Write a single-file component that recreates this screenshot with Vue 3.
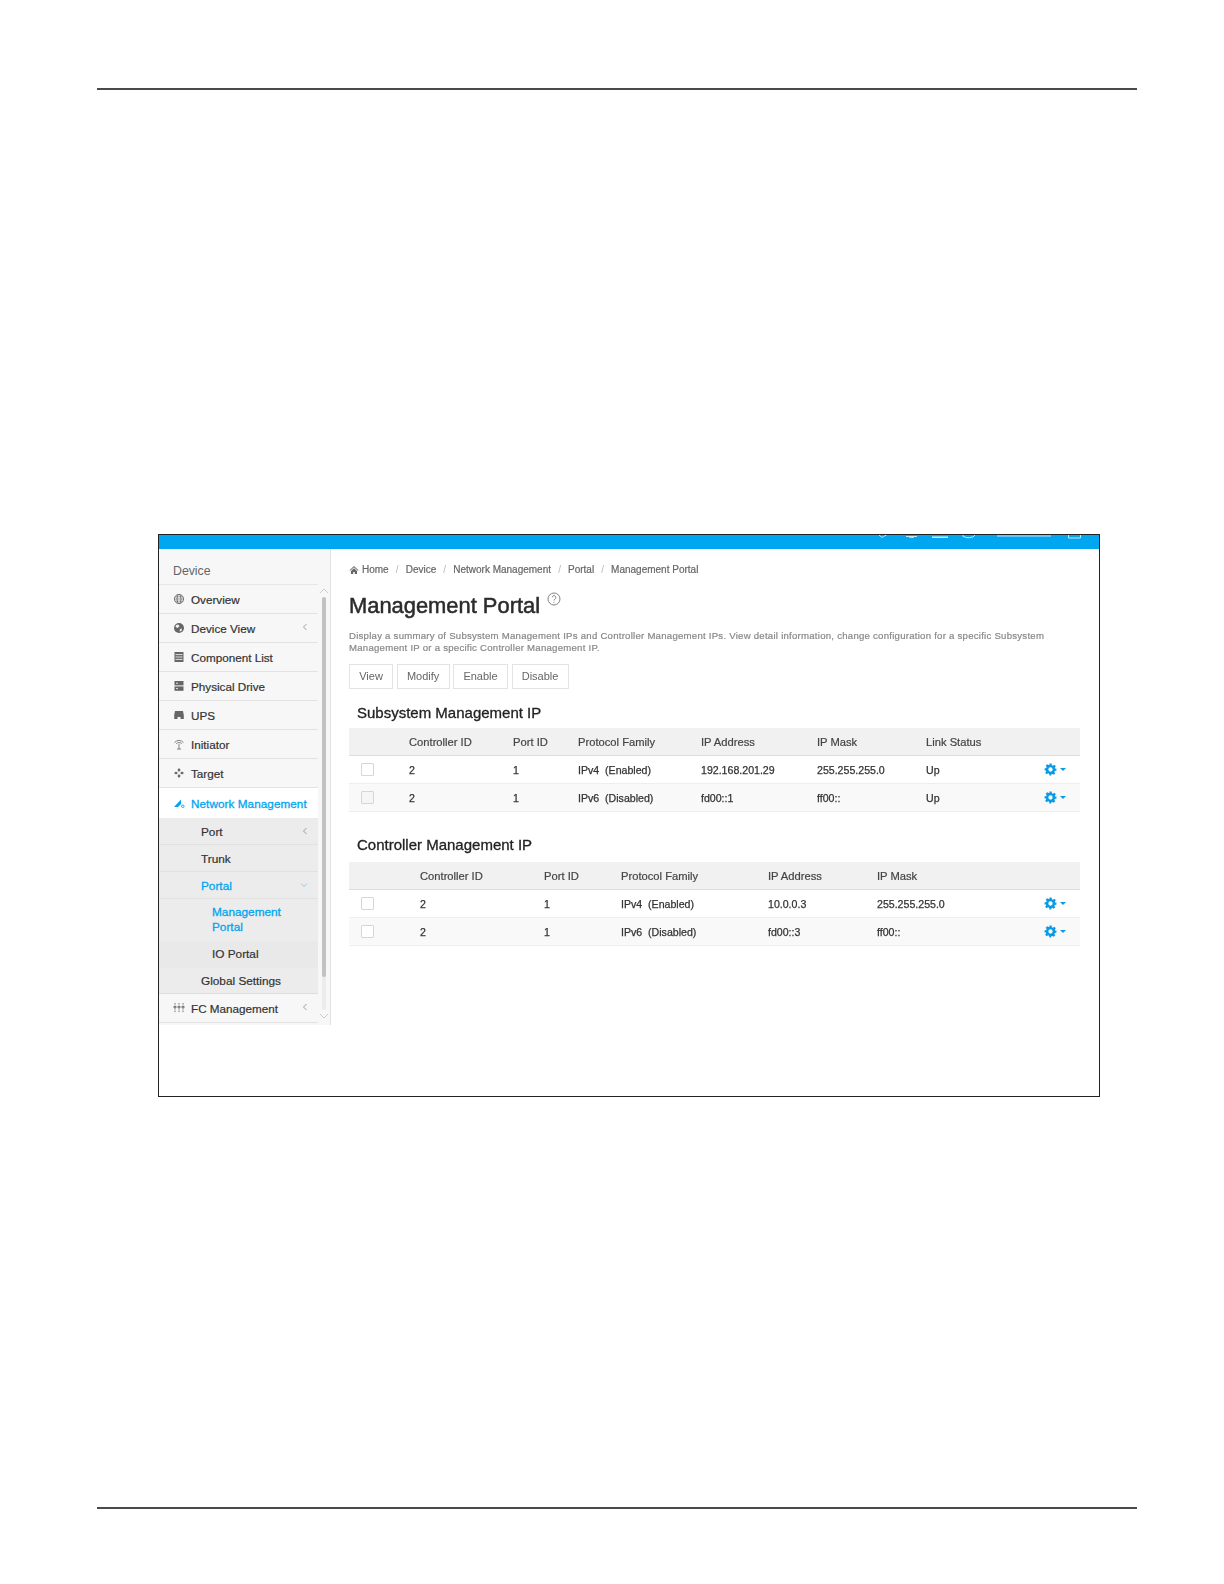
<script setup>
const t1Head = ['', 'Controller ID', 'Port ID', 'Protocol Family', 'IP Address', 'IP Mask', 'Link Status', '']
const t1Rows = [
  ['2', '1', 'IPv4  (Enabled)', '192.168.201.29', '255.255.255.0', 'Up'],
  ['2', '1', 'IPv6  (Disabled)', 'fd00::1', 'ff00::', 'Up']
]
const t2Head = ['', 'Controller ID', 'Port ID', 'Protocol Family', 'IP Address', 'IP Mask', '', '']
const t2Rows = [
  ['2', '1', 'IPv4  (Enabled)', '10.0.0.3', '255.255.255.0', ''],
  ['2', '1', 'IPv6  (Disabled)', 'fd00::3', 'ff00::', '']
]
const tables = [
  { title: 'Subsystem Management IP', cls: 't1', head: t1Head, rows: t1Rows },
  { title: 'Controller Management IP', cls: 't2', head: t2Head, rows: t2Rows }
]
const crumbs = ['Device', 'Network Management', 'Portal', 'Management Portal']
const buttons = ['View', 'Modify', 'Enable', 'Disable']
const mainItems = [
  { label: 'Overview', icon: 'globe' },
  { label: 'Device View', icon: 'earth', caret: true },
  { label: 'Component List', icon: 'list' },
  { label: 'Physical Drive', icon: 'drive' },
  { label: 'UPS', icon: 'ups' },
  { label: 'Initiator', icon: 'antenna' },
  { label: 'Target', icon: 'target' }
]
</script>

<template>
  <div class="page">
    <div class="rule"></div>
    <div class="shot">
      <div class="topbar">
        <svg class="bar-icons" width="222" height="5" viewBox="0 0 222 5" fill="none" stroke="#bfe8fb" stroke-width="1">
          <path d="M20 0l3 2.500 1.500-1 3-1.500" />
          <path d="M47 1.500h11M50 2q3 1.500 5 0" />
          <path d="M73 2.200h16" stroke-width="1.600" />
          <path d="M104 0v1.500q5 2.500 10 .5l2-2" />
          <path d="M138 1h54" stroke-width="1.600" stroke="#7fd0f7" />
          <path d="M209.500 0v3h12v-3" />
        </svg>
      </div>
      <div class="body">
        <aside class="sidebar">
          <nav class="menu">
            <div class="menu-title">Device</div>
            <div v-for="item in mainItems" :key="item.label" class="menu-row">
              <svg class="ico" viewBox="0 0 12 12" fill="none" stroke="#666" stroke-width="0.9">
                <template v-if="item.icon === 'globe'">
                  <circle cx="6" cy="6" r="4.600" /><ellipse cx="6" cy="6" rx="2" ry="4.600" /><path d="M1.400 6h9.200M2 3.800h8M2 8.200h8" stroke-width="0.6" />
                </template>
                <template v-else-if="item.icon === 'earth'">
                  <circle cx="6" cy="6" r="5" fill="#666" stroke="none" /><path d="M3 3l2.500-.5 1 2-2 1.500-2-1zM7 7l2-.5-.5 2.500-2 .5z" fill="#eee" stroke="none" />
                </template>
                <template v-else-if="item.icon === 'list'">
                  <rect x="1.500" y="1" width="9" height="10" fill="#666" stroke="none" /><path d="M2.500 3.600h7M2.500 6h7M2.500 8.400h7" stroke="#eee" />
                </template>
                <template v-else-if="item.icon === 'drive'">
                  <rect x="1.500" y="1" width="9" height="4.400" fill="#666" stroke="none" /><rect x="1.500" y="6.400" width="9" height="4.400" fill="#666" stroke="none" /><path d="M3 3.200h2M3 8.600h2" stroke="#eee" />
                </template>
                <template v-else-if="item.icon === 'ups'">
                  <path d="M2 2h8l.8 4v4H7.500V8h-3v2H1.200V6z" fill="#666" stroke="none" />
                </template>
                <template v-else-if="item.icon === 'antenna'">
                  <path d="M1.500 4.500a6 6 0 0 1 9 0M3.200 5.800a3.800 3.800 0 0 1 5.600 0M6 6v5M4 11h4" stroke-width="0.8" />
                </template>
                <template v-else>
                  <path d="M6 1l1.600 2L6 5 4.400 3zM6 7l1.600 2L6 11 4.400 9zM1 6l2-1.600L5 6 3 7.600zM7 6l2-1.600L11 6 9 7.600z" fill="#666" stroke="none" />
                </template>
              </svg>
              <span class="menu-label">{{ item.label }}</span>
              <svg v-if="item.caret" class="caret" viewBox="0 0 6 8" fill="none" stroke="#888" stroke-width="0.8"><path d="M4.500 1L1.500 4l3 3" /></svg>
            </div>
            <div class="menu-row active">
              <svg class="ico" viewBox="0 0 12 12" fill="#00a5ef"><path d="M1 10L8 2.500V7L5 10z" /><circle cx="9.800" cy="9.200" r="1.300" fill="none" stroke="#00a5ef" stroke-width="0.9" /></svg>
              <span class="menu-label">Network Management</span>
            </div>
            <div class="submenu">
              <div class="sub-row port">Port
                <svg class="caret" viewBox="0 0 6 8" fill="none" stroke="#888" stroke-width="0.8"><path d="M4.500 1L1.500 4l3 3" /></svg>
              </div>
              <div class="sub-row trunk">Trunk</div>
              <div class="sub-row portal blue">Portal
                <svg class="caret down" viewBox="0 0 8 6" fill="none" stroke="#6cc6f0" stroke-width="0.8"><path d="M1 1.500l3 3 3-3" /></svg>
              </div>
              <div class="third blue">Management<br />Portal</div>
              <div class="third io">IO Portal</div>
              <div class="sub-row global">Global Settings</div>
            </div>
            <div class="menu-row fc">
              <svg class="ico" viewBox="0 0 12 12" fill="none" stroke="#666" stroke-width="0.9">
                <path d="M2 1v10M6 1v10M10 1v10" stroke-dasharray="1.600 0.900" /><path d="M0.500 5h3M4.500 5h3M8.500 5h3" stroke-width="1.400" />
              </svg>
              <span class="menu-label">FC Management</span>
              <svg class="caret" viewBox="0 0 6 8" fill="none" stroke="#888" stroke-width="0.8"><path d="M4.500 1L1.500 4l3 3" /></svg>
            </div>
          </nav>
          <div class="scroll">
            <svg class="arrow" viewBox="0 0 10 6" fill="none" stroke="#ccc"><path d="M1 5l4-4 4 4" /></svg>
            <div class="track"><div class="thumb"></div></div>
            <svg class="arrow" viewBox="0 0 10 6" fill="none" stroke="#ccc"><path d="M1 1l4 4 4-4" /></svg>
          </div>
        </aside>

        <main class="content">
          <div class="crumbs">
            <svg class="home" viewBox="0 0 10 10" fill="#666"><path d="M5 1L0.500 5.200l.6.6L5 2.300l3.900 3.500.6-.6zM2 6v3h2.200V7h1.600v2H8V6L5 3.200z" /></svg>
            <span class="crumb">Home</span>
            <template v-for="c in crumbs" :key="c">
              <span class="sep">/</span><span class="crumb">{{ c }}</span>
            </template>
          </div>
          <div class="title-row">
            <h1>Management Portal</h1>
            <svg class="help" viewBox="0 0 14 14" fill="none" stroke="#666" stroke-width="0.8">
              <circle cx="7" cy="7" r="6" /><path d="M5.200 5.400a1.800 1.800 0 1 1 2.700 1.600c-.6.400-.9.700-.9 1.500M7 9.800v1" />
            </svg>
          </div>
          <p class="desc">Display a summary of Subsystem Management IPs and Controller Management IPs. View detail information, change configuration for a specific Subsystem Management IP or a specific Controller Management IP.</p>
          <div class="buttons">
            <div v-for="b in buttons" :key="b" class="btn">{{ b }}</div>
          </div>
          <section v-for="t in tables" :key="t.title" class="block">
            <h2>{{ t.title }}</h2>
            <div class="grid head" :class="t.cls">
              <div v-for="(h, i) in t.head" :key="i">{{ h }}</div>
            </div>
            <div v-for="(r, ri) in t.rows" :key="ri" class="grid row" :class="[t.cls, ri === 1 ? 'odd' : '']">
              <div><span class="check" :class="{ dim: ri === 1 && t.cls === 't1' }"></span></div>
              <div v-for="(c, ci) in r" :key="ci" class="cell">{{ c }}</div>
              <div class="gear-cell">
                <svg class="gear" viewBox="0 0 24 24" fill="#0a9be6">
                  <path fill-rule="evenodd" d="M10 1h4l.6 3.100 1.900.8 2.600-1.800 2.800 2.800-1.800 2.600.8 1.900L23 10v4l-3.100.6-.8 1.900 1.800 2.600-2.800 2.800-2.600-1.800-1.900.8L13 23h-3l-.6-3.100-1.900-.8-2.600 1.800-2.800-2.800 1.800-2.600-.8-1.900L1 14v-4l3.100-.6.8-1.900-1.800-2.600 2.800-2.800 2.600 1.800 1.900-.8zM12 8a4 4 0 1 0 0 8 4 4 0 0 0 0-8z" />
                </svg>
                <span class="tri"></span>
              </div>
            </div>
          </section>
        </main>
      </div>
    </div>
    <div class="rule bottom"></div>
  </div>
</template>

<style>
html, body { margin: 0; background: #fff; }
</style>

<style scoped>
.page {
  width: 1224px;
  height: 1584px;
  padding-top: 88px;
  box-sizing: border-box;
  font-family: "Liberation Sans", Arial, sans-serif;
  color: #333;
  overflow: hidden;
}
.rule { height: 2px; width: 1040px; margin-left: 97px; background: #4a4a4a; }
.rule.bottom { margin-top: 410px; }
.shot {
  margin: 444px 0 0 158px;
  width: 942px;
  height: 563px;
  box-sizing: border-box;
  border: 1px solid #222;
  background: #fff;
  overflow: hidden;
}
.topbar { height: 14px; background: #00a6f0; display: flex; justify-content: flex-end; align-items: flex-start; padding-right: 18px; }
.bar-icons { display: block; }
.body { display: flex; align-items: flex-start; filter: blur(0.3px); }
.sidebar {
  width: 172px;
  height: 476px;
  flex: none;
  display: flex;
  background: #f7f7f7;
  border-right: 1px solid #e2e2e2;
  box-sizing: border-box;
}
.menu { width: 159px; flex: none; }
.menu-title {
  height: 36px;
  box-sizing: border-box;
  padding: 15px 0 0 14px;
  font-size: 12.3px;
  line-height: 14px;
  color: #666;
  border-bottom: 1px solid #e6e6e6;
}
.menu-row {
  height: 29px;
  box-sizing: border-box;
  display: flex;
  align-items: center;
  padding: 1px 10px 0 14px;
  border-bottom: 1px solid #e2e2e2;
  font-size: 11.7px;
  color: #333;
  -webkit-text-stroke: 0.2px #333;
}
.ico { width: 12px; height: 12px; flex: none; margin-right: 6px; margin-top: -2px; }
.menu-label { white-space: nowrap; flex: 1; }
.caret { width: 6px; height: 8px; margin-left: auto; margin-top: -3px; flex: none; }
.caret.down { width: 8px; height: 6px; }
.active { background: #fff; color: #00a5ef; height: 30px; border-bottom: none; -webkit-text-stroke: 0.3px #00a5ef; padding-right: 8px; letter-spacing: 0.08px; }
.submenu { background: #ececec; font-size: 11.8px; color: #333; -webkit-text-stroke: 0.2px #333; }
.sub-row {
  display: flex;
  align-items: center;
  padding: 2px 10px 0 42px;
  height: 27px;
  box-sizing: border-box;
  border-bottom: 1px solid #e2e2e2;
}
.sub-row.global { border-bottom: 1px solid #ddd; height: 26px; padding-top: 0; }
.blue { color: #00a5ef; -webkit-text-stroke: 0.3px #00a5ef; }
.third {
  padding: 6px 0 0 53px;
  font-size: 11.8px;
  line-height: 15px;
  height: 42px;
  box-sizing: border-box;
}
.third.io { height: 27px; padding-top: 6px; background: #e9e9e9; line-height: 15px; }
.fc { height: 29px; }
.scroll { flex: 1; display: flex; flex-direction: column; align-items: center; padding-top: 39px; }
.arrow { width: 10px; height: 6px; flex: none; margin-left: -1px; }
.track { width: 4px; height: 413px; margin: 3px 0 3px 0; background: #ececec; border-radius: 2px; }
.thumb { height: 380px; background: #c2c2c2; border-radius: 2px; }
.content { flex: 1; padding: 14px 19px 0 18px; min-width: 0; }
.crumbs { display: flex; align-items: center; height: 13px; font-size: 10px; color: #666; -webkit-text-stroke: 0.2px #666; }
.home { width: 10px; height: 10px; margin-right: 3px; }
.sep { margin: 0 7.1px; color: #bbb; -webkit-text-stroke: 0; }
.title-row { display: flex; align-items: flex-start; margin-top: 16px; height: 27px; }
h1 { margin: 0; font-size: 21.9px; line-height: 27px; font-weight: 400; color: #2b2b2b; -webkit-text-stroke: 0.5px #2b2b2b; }
.help { width: 14px; height: 14px; margin: 0 0 0 7px; }
.desc { margin: 11px 0 0; width: 700px; font-size: 9.6px; line-height: 11.5px; letter-spacing: 0.25px; color: #888; -webkit-text-stroke: 0.2px #888; }
.buttons { display: flex; gap: 3.7px; margin-top: 10.5px; }
.btn {
  height: 25px;
  line-height: 23px;
  box-sizing: border-box;
  padding: 0 9.2px;
  border: 1px solid #e3e3e3;
  font-size: 11px;
  color: #666;
  background: #fff;
}
.block { margin-top: 15px; }
.block + .block { margin-top: 24px; }
.block h2 { margin: 0; height: 16px; padding-left: 8px; font-size: 15px; line-height: 18px; font-weight: 400; color: #222; -webkit-text-stroke: 0.3px #222; }
.grid { display: grid; align-items: center; font-size: 10.6px; width: 731px; white-space: pre; }
.t1 { grid-template-columns: 60px 104px 65px 123px 116px 109px 125px 29px; }
.t2 { grid-template-columns: 71px 124px 77px 147px 109px 172px 1px 30px; }
.head { height: 28px; background: #f1f1f1; border-bottom: 1px solid #ddd; box-sizing: border-box; margin-top: 8.5px; font-size: 11.2px; color: #444; -webkit-text-stroke: 0.2px #444; }
.head.t2 { margin-top: 10px; }
.row { height: 28px; border-bottom: 1px solid #eee; box-sizing: border-box; color: #333; -webkit-text-stroke: 0.25px #333; }
.row.odd { background: #f9f9f9; }
.check { display: block; width: 13px; height: 13px; margin-left: 12px; box-sizing: border-box; border: 1px solid #d6d6d6; background: #fff; border-radius: 1px; }
.check.dim { background: #f5f5f5; }
.gear-cell { display: flex; align-items: center; justify-content: flex-start; gap: 3px; grid-column: -2 / -1; margin-left: -7px; }
.t2 .gear-cell { margin-left: -6px; }
.gear { width: 13px; height: 13px; flex: none; }
.tri { width: 0; height: 0; border-left: 3px solid transparent; border-right: 3px solid transparent; border-top: 3px solid #0a9be6; }
</style>
